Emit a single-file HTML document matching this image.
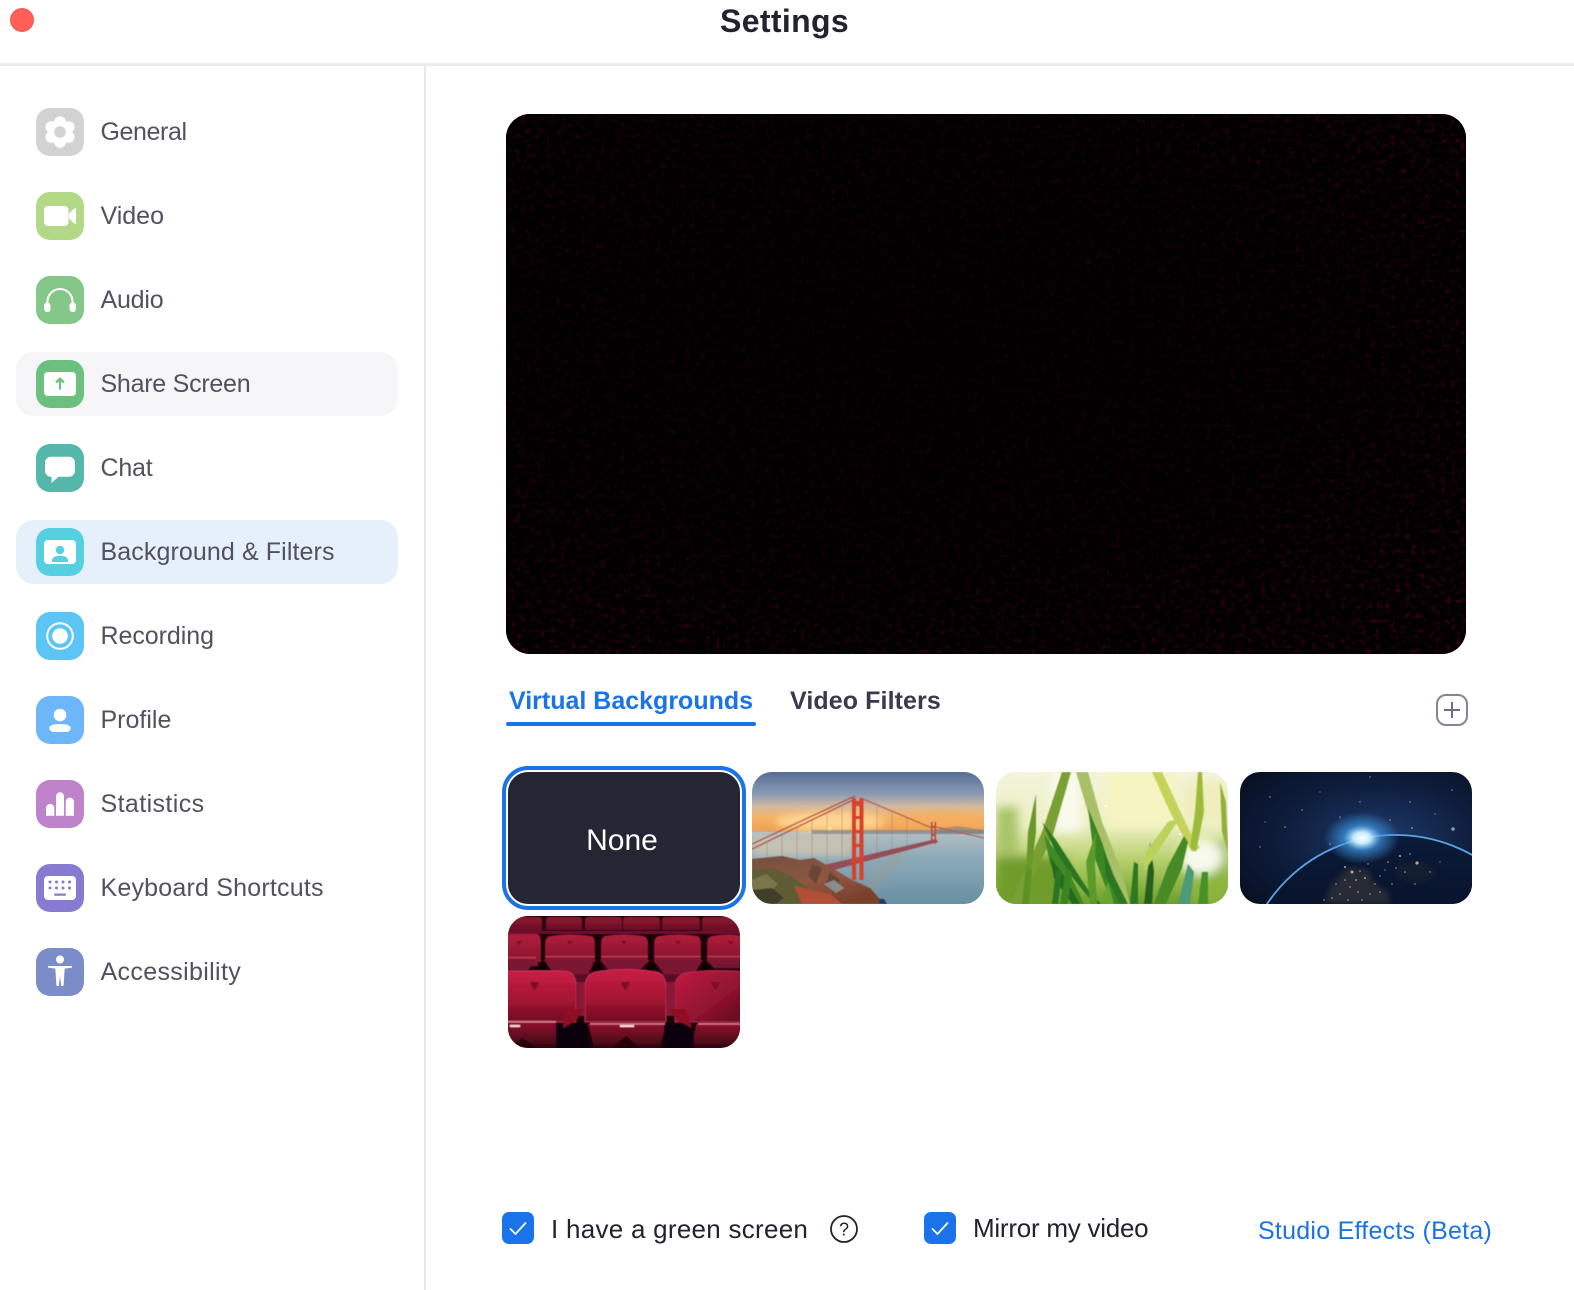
<!DOCTYPE html>
<html lang="en">
<head>
<meta charset="utf-8">
<title>Settings</title>
<style>
*{box-sizing:border-box;margin:0;padding:0}
html,body{width:1574px;height:1290px;overflow:hidden;background:#fff}
body{position:relative;font-family:"Liberation Sans",Arial,sans-serif}
.abs{position:absolute}
.dot{left:10px;top:8px;width:24px;height:24px;border-radius:50%;background:#ff5f57;border:1px solid #ee5a52}
.title{left:720px;top:1px;width:140px;height:40px;line-height:40px;font-size:32px;font-weight:700;color:#23232f;letter-spacing:.35px;white-space:nowrap}
.hline{left:0;top:63px;width:1574px;height:3px;background:#e9ebf0}
.vline{left:424px;top:66px;width:2px;height:1224px;background:#e8e8ec}
.hl{left:16px;width:382px;height:64px;border-radius:18px}
.nav{left:36px;width:380px;height:48px;display:block}
.nav svg{position:absolute;left:0;top:0;width:48px;height:48px}
.nav span{position:absolute;left:64.5px;top:0;line-height:48px;font-size:25px;color:#52525f;white-space:nowrap}
.video{left:506px;top:114px;width:960px;height:540px;border-radius:24px;overflow:hidden;background:#020000}
.tab{font-size:25px;font-weight:700;white-space:nowrap;line-height:36px;height:36px}
.ul{left:506px;top:722px;width:250px;height:4px;border-radius:2px;background:#1a73e8}
.sel{left:502px;top:766px;width:244px;height:144px;border:4px solid #1a73e8;border-radius:26px;background:#fff}
.none{left:508px;top:772px;width:232px;height:132px;border-radius:20px;background:#252533;color:#fff;font-size:30px;text-align:center;line-height:138px;padding-right:4px}
.th{position:absolute;width:232px;height:132px;display:block}
.cb{width:32px;height:32px;border-radius:7px;background:#1a73e8}
.lbl{font-size:26px;color:#23232f;white-space:nowrap;line-height:36px;height:36px}
</style>
</head>
<body>
<div class="abs dot"></div>
<div class="abs title">Settings</div>
<div class="abs hline"></div>
<div class="abs vline"></div>

<div class="abs hl" style="top:352px;background:#f6f6f9"></div>
<div class="abs hl" style="top:520px;background:#e6f0fb"></div>

<div class="abs nav" style="top:108px"><svg viewBox="0 0 48 48"><rect width="48" height="48" rx="14" fill="#d2d2d2"/><g fill="#fff"><circle cx="24" cy="24" r="12.500"/><circle cx="24" cy="14" r="5.800"/><circle cx="24" cy="34" r="5.800"/><circle cx="15.300" cy="19" r="5.800"/><circle cx="32.700" cy="19" r="5.800"/><circle cx="15.300" cy="29" r="5.800"/><circle cx="32.700" cy="29" r="5.800"/></g><circle cx="24" cy="24" r="5.800" fill="#d2d2d2"/></svg><span style="letter-spacing:-.4px">General</span></div>

<div class="abs nav" style="top:192px"><svg viewBox="0 0 48 48"><rect width="48" height="48" rx="14" fill="#b2d888"/><rect x="8" y="14" width="24.500" height="20" rx="4" fill="#fff"/><path d="M33 21.500 38.600 16.300a.8.8 0 0 1 1.400.6v14.200a.8.8 0 0 1-1.400.6L33 26.500Z" fill="#fff"/></svg><span>Video</span></div>

<div class="abs nav" style="top:276px"><svg viewBox="0 0 48 48"><rect width="48" height="48" rx="14" fill="#85c788"/><path d="M11.500 29V25.500a12.500 12.500 0 0 1 25 0V29" fill="none" stroke="#fff" stroke-width="2"/><rect x="8" y="26.500" width="6.500" height="9.500" rx="3.200" fill="#fff"/><rect x="33.500" y="26.500" width="6.500" height="9.500" rx="3.200" fill="#fff"/></svg><span style="letter-spacing:-.2px">Audio</span></div>

<div class="abs nav" style="top:360px"><svg viewBox="0 0 48 48"><rect width="48" height="48" rx="14" fill="#6cc07f"/><rect x="8" y="12" width="32" height="24" rx="4" fill="#fff"/><path d="M24 29.500V19M20 22.600 24 18.600 28 22.600" fill="none" stroke="#6cc07f" stroke-width="2.200"/></svg><span style="letter-spacing:-.25px">Share Screen</span></div>

<div class="abs nav" style="top:444px"><svg viewBox="0 0 48 48"><rect width="48" height="48" rx="14" fill="#55b6ab"/><path d="M15 12.700H33a6 6 0 0 1 6 6V26.700a6 6 0 0 1-6 6H22.500L15.500 39V32.700H15a6 6 0 0 1-6-6V18.700a6 6 0 0 1 6-6Z" fill="#fff"/></svg><span style="letter-spacing:-.2px">Chat</span></div>

<div class="abs nav" style="top:528px"><svg viewBox="0 0 48 48"><rect width="48" height="48" rx="14" fill="#56d0e0"/><rect x="8" y="12" width="32" height="24" rx="4" fill="#fff"/><circle cx="24" cy="22" r="4.200" fill="#56d0e0"/><path d="M16 34v-1.500c0-3 3-4.800 8-4.800s8 1.800 8 4.800V34Z" fill="#56d0e0"/></svg><span style="letter-spacing:.1px">Background &amp; Filters</span></div>

<div class="abs nav" style="top:612px"><svg viewBox="0 0 48 48"><rect width="48" height="48" rx="14" fill="#5cc5f6"/><circle cx="24" cy="24" r="12.800" fill="none" stroke="#fff" stroke-width="2"/><circle cx="24" cy="24" r="7.800" fill="#fff"/></svg><span style="letter-spacing:-.05px">Recording</span></div>

<div class="abs nav" style="top:696px"><svg viewBox="0 0 48 48"><rect width="48" height="48" rx="14" fill="#6db7f8"/><circle cx="24" cy="19" r="6.300" fill="#fff"/><path d="M17.500 36A4.200 4.200 0 0 1 13.300 31.800C13.300 29.500 17.500 28 24 28S34.700 29.500 34.700 31.800A4.200 4.200 0 0 1 30.500 36Z" fill="#fff"/></svg><span>Profile</span></div>

<div class="abs nav" style="top:780px"><svg viewBox="0 0 48 48"><rect width="48" height="48" rx="14" fill="#bf83cc"/><g fill="#fff"><path d="M10 35.700V28a4.100 4.100 0 0 1 8.300 0V35.700Z"/><path d="M20 35.700V16.300a4 4 0 0 1 8 0V35.700Z"/><path d="M29.700 35.700V21.800a4.100 4.100 0 0 1 8.300 0V35.700Z"/></g></svg><span style="letter-spacing:.4px">Statistics</span></div>

<div class="abs nav" style="top:864px"><svg viewBox="0 0 48 48"><rect width="48" height="48" rx="14" fill="#877ad1"/><rect x="8" y="12" width="32" height="24" rx="4" fill="#fff"/><g fill="#877ad1"><circle cx="14" cy="18" r="1.500"/><circle cx="20.500" cy="18" r="1.500"/><circle cx="27" cy="18" r="1.500"/><circle cx="33.500" cy="18" r="1.500"/><circle cx="14" cy="24" r="1.500"/><circle cx="20.500" cy="24" r="1.500"/><circle cx="27" cy="24" r="1.500"/><circle cx="33.500" cy="24" r="1.500"/><rect x="18" y="29.500" width="12" height="2.200" rx="1"/></g></svg><span style="letter-spacing:.2px">Keyboard Shortcuts</span></div>

<div class="abs nav" style="top:948px"><svg viewBox="0 0 48 48"><rect width="48" height="48" rx="14" fill="#7b8dc9"/><circle cx="24" cy="11.500" r="4" fill="#fff"/><path d="M12.800 18H35.200a.85.85 0 0 1 0 1.700L28.700 20.600 27.500 38H25.200L24 28 22.800 38H20.500L19.300 20.600 12.800 19.700a.85.85 0 0 1 0-1.700Z" fill="#fff"/></svg><span style="letter-spacing:.34px">Accessibility</span></div>

<div class="abs video">
<svg width="960" height="540" viewBox="0 0 960 540" style="display:block">
<defs>
<filter id="nz" x="0" y="0" width="100%" height="100%"><feTurbulence type="fractalNoise" baseFrequency=".2" numOctaves="2" seed="4"/><feColorMatrix values="0 0 0 0 .22  0 0 0 0 0  0 0 0 0 .02  1.800 0 0 0 -.95"/></filter>
<radialGradient id="vm" cx=".42" cy=".42" r=".75"><stop offset="0" stop-color="#fff" stop-opacity=".2"/><stop offset=".55" stop-color="#fff" stop-opacity=".35"/><stop offset="1" stop-color="#fff" stop-opacity=".85"/></radialGradient>
<mask id="vmask"><rect width="960" height="540" fill="url(#vm)"/></mask>
</defs>
<rect width="960" height="540" fill="#020000"/>
<g mask="url(#vmask)"><rect width="960" height="540" filter="url(#nz)"/></g>
</svg>
</div>

<div class="abs tab" style="left:509px;top:683px;color:#1a73e8">Virtual Backgrounds</div>
<div class="abs ul"></div>
<div class="abs tab" style="left:790px;top:683px;color:#3a3a4f;letter-spacing:.1px">Video Filters</div>
<svg class="abs" style="left:1436px;top:694px" width="32" height="32" viewBox="0 0 32 32"><rect x="1" y="1" width="30" height="30" rx="9" fill="none" stroke="#85859a" stroke-width="2"/><path d="M16 8V24M8 16H24" stroke="#6f6f84" stroke-width="2" fill="none"/></svg>

<div class="abs sel"></div>
<div class="abs none">None</div>

<!-- bridge -->
<svg class="th" style="left:752px;top:772px" viewBox="0 0 232 132">
<defs>
<clipPath id="c1"><rect width="232" height="132" rx="20"/></clipPath>
<linearGradient id="sky" x1="0" y1="0" x2="0" y2="1"><stop offset="0" stop-color="#566e94"/><stop offset=".35" stop-color="#8a9ab4"/><stop offset=".55" stop-color="#d0b9a2"/><stop offset=".72" stop-color="#f4b468"/><stop offset=".92" stop-color="#f0a252"/><stop offset="1" stop-color="#b5aca6"/></linearGradient>
<linearGradient id="wat" x1="0" y1="0" x2="0" y2="1"><stop offset="0" stop-color="#b3bfc2"/><stop offset=".35" stop-color="#8eabb9"/><stop offset="1" stop-color="#688fa3"/></linearGradient>
<linearGradient id="rock" x1="0" y1="0" x2=".6" y2="1"><stop offset="0" stop-color="#74503f"/><stop offset=".6" stop-color="#8f5640"/><stop offset="1" stop-color="#7a3f2c"/></linearGradient>
<filter id="b1"><feGaussianBlur stdDeviation=".6"/></filter>
<filter id="b3"><feGaussianBlur stdDeviation="4"/></filter>
</defs>
<g clip-path="url(#c1)">
<rect width="232" height="62" fill="url(#sky)"/>
<rect y="60" width="232" height="72" fill="url(#wat)"/>
<g filter="url(#b3)"><ellipse cx="78" cy="50" rx="55" ry="10" fill="#ffdc9a" opacity=".85"/><ellipse cx="190" cy="48" rx="50" ry="8" fill="#f5ae60" opacity=".75"/><rect y="64" width="100" height="20" fill="#cfc6b2" opacity=".8"/><path d="M150 78 130 100 115 120" stroke="#a09c8c" stroke-width="12" opacity=".4" fill="none"/></g>
<g filter="url(#b1)">
<circle cx="77" cy="57" r="2.500" fill="#ffe58a"/>
<path d="M60 58H232V62H60Z" fill="#83878f" opacity=".75"/>
<path d="M180 58 205 54 232 58V62H180Z" fill="#7d7f86" opacity=".6"/>
<path d="M0 77 103 27M0 72 103 24" stroke="#b24a3e" stroke-width="1.200" fill="none"/>
<path d="M111 27 180 56M180 54 232 66" stroke="#b25248" stroke-width="1" fill="none"/>
<path d="M15 70V92M30 62V92M45 55V92M60 48V92M75 41V92M90 33V92M125 34V82M140 40V78M155 46V74" stroke="#a8706a" stroke-width=".6" opacity=".7"/>
<path d="M72 93 184 67 186 70 78 99Z" fill="#974e54"/>
<path d="M100 26h4V108h-4ZM107.500 26h4V108h-4Z" fill="#d8402c"/>
<path d="M100 29h11v5h-11ZM100 44h11v3h-11ZM100 58h11v3h-11ZM100 72h11v3h-11ZM100 86h11v3h-11Z" fill="#d8402c"/>
<path d="M179 50h1.500V72H179ZM182.500 50h1.500V72h-1.500ZM179 54h5v2h-5ZM179 62h5v2h-5Z" fill="#b8493d"/>
<path d="M0 87 30 84 48 88 62 86 80 96 100 108 118 116 132 132H0Z" fill="url(#rock)"/>
<path d="M0 98 20 96 40 104 56 116 62 132H0Z" fill="#5f5c36"/>
<path d="M0 108 14 102 26 112 20 118 0 118Z" fill="#79774a"/>
<path d="M0 118 20 116 32 126 24 132H0Z" fill="#3f3d29"/>
<path d="M42 114 78 122 90 132H50Z" fill="#b04f35"/>
<path d="M60 92 70 96 64 112 56 104ZM78 100 88 108 82 120 74 112Z" fill="#6a4436"/>
<path d="M72 112l10-4 10 8-8 5Z" fill="#8ca0a0" opacity=".8"/>
<path d="M128 132l-2-5 6 0 3 5Z" fill="#223a6a"/>
</g>
</g>
</svg>

<!-- grass -->
<svg class="th" style="left:996px;top:772px" viewBox="0 0 232 132">
<defs>
<clipPath id="c2"><rect width="232" height="132" rx="20"/></clipPath>
<linearGradient id="gbg" x1="0" y1="0" x2="0" y2="1"><stop offset="0" stop-color="#f3f3dc"/><stop offset=".4" stop-color="#eef0c4"/><stop offset=".68" stop-color="#b4ce68"/><stop offset="1" stop-color="#6c9e2a"/></linearGradient>
<filter id="b2"><feGaussianBlur stdDeviation="5"/></filter>
<filter id="b4"><feGaussianBlur stdDeviation=".6"/></filter>
</defs>
<g clip-path="url(#c2)">
<rect width="232" height="132" fill="url(#gbg)"/>
<g filter="url(#b2)">
<rect x="0" y="35" width="22" height="55" fill="#a9c46a"/>
<rect x="0" y="85" width="70" height="47" fill="#6f9c2c"/>
<rect x="195" y="70" width="37" height="62" fill="#8cb53e"/>
<rect x="110" y="0" width="70" height="55" fill="#f6f4c0"/>
<rect x="190" y="10" width="40" height="40" fill="#f0eebc"/>
<ellipse cx="205" cy="85" rx="22" ry="18" fill="#f7faec"/>
<rect x="55" y="0" width="30" height="60" fill="#f9f9ee"/>
</g>
<g filter="url(#b4)">
<path d="M75 0 66 0 46 60 14 132 24 132 56 66Z" fill="#78a032"/>
<path d="M80 0 92 0 106 50 126 100 134 132 126 132 98 60Z" fill="#a8c068"/>
<path d="M156 0 166 0 194 60 204 76 196 80 174 40Z" fill="#c5d35a"/>
<path d="M202 0 206 0 208 40 200 80 194 76 199 40Z" fill="#9dbb3a"/>
<path d="M224 10 230 30 232 80 226 60Z" fill="#8fb13a"/>
<path d="M40 22 32 60 30 100 35 100 40 60Z" fill="#6a972c"/>
<path d="M46 50 60 68 96 124 106 132 98 132 64 90Z" fill="#2c7420"/>
<path d="M48 62 72 98 88 132 80 132 54 92Z" fill="#3f8a28"/>
<path d="M54 84 68 104 84 132 76 132 58 106Z" fill="#246a1c"/>
<path d="M92 36 106 70 126 132 116 132 98 84Z" fill="#3a8522"/>
<path d="M108 78 118 104 132 132 124 132 110 104Z" fill="#2a7620"/>
<path d="M152 96 148 132 156 132 158 100 154 70Z" fill="#285f1c"/>
<path d="M188 64 172 94 158 132 170 132 186 96 192 70Z" fill="#468a28"/>
<path d="M192 92 182 132 194 132 198 100Z" fill="#4e9a78"/>
<path d="M100 60 90 90 94 132 101 132 99 92Z" fill="#5b9a2c"/>
<path d="M60 98 56 132 62 132 66 100Z" fill="#2c7420"/>
<path d="M30 96 26 132 33 132 36 98Z" fill="#5a9228"/>
<path d="M112 110 104 132 118 132Z" fill="#6aa436"/>
<path d="M150 80 172 50 184 46 164 76 148 100Z" fill="#b9d35c"/>
<path d="M206 100 202 132 212 132 212 100Z" fill="#469026"/>
<path d="M138 90 134 132 142 132 142 92Z" fill="#2f7820"/>
<path d="M70 96 64 132 72 132 76 100Z" fill="#3a8424"/>
</g>
<g fill="#fff" opacity=".75"><circle cx="70" cy="26" r="1.500"/><circle cx="54" cy="32" r="1.300"/><circle cx="110" cy="34" r="1.600"/><circle cx="184" cy="62" r="1.300"/><circle cx="70" cy="45" r="1"/></g>
</g>
</svg>

<!-- earth -->
<svg class="th" style="left:1240px;top:772px" viewBox="0 0 232 132">
<defs>
<clipPath id="c3"><rect width="232" height="132" rx="20"/></clipPath>
<radialGradient id="sbg" cx=".6" cy=".5" r=".75"><stop offset="0" stop-color="#1d3a6c"/><stop offset=".55" stop-color="#0e1d3c"/><stop offset="1" stop-color="#080f22"/></radialGradient>
<radialGradient id="glow" cx=".5" cy=".5" r=".5"><stop offset="0" stop-color="#fff"/><stop offset=".22" stop-color="#c5ecff"/><stop offset=".5" stop-color="#3f9be8" stop-opacity=".65"/><stop offset="1" stop-color="#3f9be8" stop-opacity="0"/></radialGradient>
<linearGradient id="ea" x1="0" y1="0" x2="0" y2="1"><stop offset="0" stop-color="#0b1a38"/><stop offset=".5" stop-color="#060d1e"/></linearGradient>
<filter id="b6"><feGaussianBlur stdDeviation="3"/></filter>
</defs>
<g clip-path="url(#c3)">
<rect width="232" height="132" fill="url(#sbg)"/>
<g fill="#b9cee0" opacity=".7"><circle cx="30" cy="25" r=".8"/><circle cx="45" cy="55" r=".8"/><circle cx="62" cy="38" r=".7"/><circle cx="20" cy="75" r=".7"/><circle cx="130" cy="5" r=".7"/><circle cx="170" cy="30" r=".7"/><circle cx="212" cy="18" r=".7"/><circle cx="213" cy="57" r="1.800"/><circle cx="172" cy="56" r=".9"/><circle cx="90" cy="72" r=".8"/><circle cx="60" cy="100" r=".8"/><circle cx="100" cy="45" r=".7"/><circle cx="150" cy="48" r=".8"/><circle cx="25" cy="50" r=".6"/><circle cx="80" cy="20" r=".6"/><circle cx="120" cy="30" r=".7"/><circle cx="195" cy="42" r=".6"/></g>
<circle cx="156" cy="218" r="155" fill="url(#ea)" stroke="#5aa2e4" stroke-width="1.800"/>
<ellipse cx="122" cy="66" rx="38" ry="26" fill="url(#glow)"/>
<g filter="url(#b6)" opacity=".3"><path d="M84 132 92 112 108 96 128 98 134 112 148 120 150 132Z" fill="#6a5c46"/><ellipse cx="175" cy="100" rx="20" ry="10" fill="#2e2e33"/></g>
<g fill="#d4bf92" opacity=".85"><circle cx="105" cy="95" r="1"/><circle cx="112" cy="100" r="1.500"/><circle cx="120" cy="99" r=".8"/><circle cx="125" cy="106" r="1"/><circle cx="135" cy="112" r=".8"/><circle cx="100" cy="122" r=".8"/><circle cx="92" cy="126" r=".8"/><circle cx="140" cy="120" r=".8"/><circle cx="148" cy="90" r=".8"/><circle cx="160" cy="84" r="1"/><circle cx="177" cy="91" r="1.600"/><circle cx="165" cy="100" r=".8"/><circle cx="190" cy="100" r=".7"/><circle cx="110" cy="115" r=".8"/><circle cx="118" cy="120" r=".8"/><circle cx="105" cy="108" r=".8"/><circle cx="128" cy="92" r=".7"/><circle cx="152" cy="112" r=".7"/><circle cx="175" cy="112" r=".7"/><circle cx="96" cy="112" r=".7"/><circle cx="116" cy="108" r=".9"/><circle cx="130" cy="122" r=".7"/><circle cx="108" cy="128" r=".7"/><circle cx="84" cy="128" r=".7"/><circle cx="122" cy="128" r=".7"/><circle cx="140" cy="104" r=".7"/><circle cx="156" cy="96" r=".7"/><circle cx="170" cy="82" r=".7"/><circle cx="200" cy="90" r=".6"/><circle cx="145" cy="98" r=".6"/></g>
</g>
</svg>

<!-- seats -->
<svg class="th" style="left:508px;top:916px" viewBox="0 0 232 132">
<defs>
<clipPath id="c4"><rect width="232" height="132" rx="20"/></clipPath>
<linearGradient id="s1" x1="0" y1="0" x2="0" y2="1"><stop offset="0" stop-color="#c91e45"/><stop offset=".55" stop-color="#a51432"/><stop offset="1" stop-color="#700c22"/></linearGradient>
<linearGradient id="s1r" x1="0" y1="0" x2="1" y2="1"><stop offset="0" stop-color="#c01c40"/><stop offset=".6" stop-color="#8f1230"/><stop offset="1" stop-color="#5c0a1c"/></linearGradient>
<linearGradient id="s2" x1="0" y1="0" x2="0" y2="1"><stop offset="0" stop-color="#b01e3c"/><stop offset="1" stop-color="#86122c"/></linearGradient>
<linearGradient id="s3" x1="0" y1="0" x2="0" y2="1"><stop offset="0" stop-color="#8e1630"/><stop offset="1" stop-color="#6a0e24"/></linearGradient>
<linearGradient id="c5" x1="0" y1="0" x2="0" y2="1"><stop offset="0" stop-color="#92102e"/><stop offset="1" stop-color="#350512"/></linearGradient>
<filter id="b5"><feGaussianBlur stdDeviation=".6"/></filter>
</defs>
<g clip-path="url(#c4)">
<rect width="232" height="132" fill="#170308"/>
<g filter="url(#b5)">
<rect y="0" width="232" height="18" fill="#22050c"/>
<g fill="url(#s3)"><path d="M-4 1H30Q34 1 34 5V15H-4Z"/><path d="M41 1H70Q74 1 74 5V14H38V5Q38 1 41 1Z"/><path d="M80 1H110Q114 1 114 5V14H77V5Q77 1 80 1Z"/><path d="M118 1H148Q152 1 152 5V14H115V5Q115 1 118 1Z"/><path d="M157 1H188Q192 1 192 5V14H154V5Q154 1 157 1Z"/><path d="M197 1H236V15H194V5Q194 1 197 1Z"/></g>
<rect y="15" width="232" height="3" fill="#6e1030"/>
<rect y="45" width="232" height="14" fill="#1e040b"/>
<g fill="url(#s2)"><path d="M-4 18H28Q33 18 33 26V50H-4Z"/><path d="M42 20Q62 17 83 20 87 21 87 28V44H37V28Q37 21 42 20Z"/><path d="M97 20Q116 17 135 20 140 21 140 28V44H93V28Q93 21 97 20Z"/><path d="M151 20Q170 17 189 20 193 21 193 28V44H146V28Q146 21 151 20Z"/><path d="M204 20Q220 17 236 20V44H199V28Q199 21 204 20Z"/></g>
<g fill="#7c0f28"><path d="M8 25h6l-3 4ZM59 25h6l-3 4ZM113 25h6l-3 4ZM167 25h6l-3 4ZM220 25h6l-3 4Z"/></g>
<g fill="#c0405e"><rect x="0" y="41" width="28" height="1.200"/><rect x="37" y="40" width="50" height="1.200"/><rect x="93" y="40" width="47" height="1.200"/><rect x="146" y="40" width="47" height="1.200"/><rect x="199" y="40" width="33" height="1.200"/></g>
<g fill="#7a1230"><path d="M36 44H88L80 58H46Z"/><path d="M92 44H142L132 54H100Z"/><path d="M145 44H195L186 58H156Z"/><path d="M198 44H232V52H206Z"/><path d="M0 44H28L20 54H0Z"/></g>
<g fill="#0a0204"><rect x="30" y="46" width="8" height="8"/><rect x="85" y="46" width="8" height="12"/><rect x="140" y="46" width="6" height="10"/><rect x="194" y="46" width="6" height="10"/></g>
<rect y="57" width="232" height="11" fill="#8d1640" opacity=".55"/>
<path d="M-4 55H55Q68 55 68 70V106H-4Z" fill="url(#s1)" stroke="#c7305a" stroke-width="1"/>
<path d="M88 56Q118 51 148 56 158 58 158 72V106H77V72Q77 58 88 56Z" fill="url(#s1)" stroke="#c7305a" stroke-width="1"/>
<path d="M178 57Q205 53 236 56V106H167V72Q167 59 178 57Z" fill="url(#s1r)" stroke="#b82a50" stroke-width="1"/>
<rect x="68" y="66" width="9" height="34" fill="#8a1438"/>
<rect x="158" y="66" width="9" height="34" fill="#8a1438"/>
<g fill="#7d0c26"><path d="M22 66h9l-2 5-2.500 3-2.500-3Z"/><path d="M113 66h9l-2 5-2.500 3-2.500-3Z"/><path d="M203 66h9l-2 5-2.500 3-2.500-3Z"/></g>
<path d="M-4 106H48L52 132H-4Z" fill="url(#c5)"/>
<path d="M80 108H158L152 132H86Z" fill="url(#c5)"/>
<path d="M188 108H236V132H184Z" fill="url(#c5)"/>
<path d="M104 132 118 120 132 132Z" fill="#25060e"/>
<path d="M0 132 14 122 30 132Z" fill="#25060e"/>
<rect x="48" y="108" width="32" height="24" fill="#110308"/>
<rect x="156" y="108" width="30" height="24" fill="#110308"/>
<g fill="#df7c92"><rect x="0" y="105" width="48" height="1.600"/><rect x="82" y="107" width="75" height="1.600"/><rect x="190" y="107" width="42" height="1.600"/><rect x="112" y="109" width="14" height="2" fill="#ffe0e6"/><rect x="2" y="109" width="10" height="2" fill="#ffd8e0"/></g>
<path d="M56 93H76L68 105 55 112Z" fill="#8f1024"/>
<path d="M160 93H178L184 112 170 105Z" fill="#8f1024"/>
</g>
</g>
</svg>

<div class="abs cb" style="left:502px;top:1212px"><svg width="32" height="32" viewBox="0 0 32 32"><path d="M8 16.500 13.500 22 24 10.500" fill="none" stroke="#fff" stroke-width="1.800"/></svg></div>
<div class="abs lbl" style="left:551px;top:1211px;letter-spacing:.27px">I have a green screen</div>
<svg class="abs" style="left:830px;top:1215px" width="28" height="28" viewBox="0 0 28 28"><circle cx="14" cy="14" r="13" fill="#fff" stroke="#23232f" stroke-width="1.800"/><text x="14" y="20.500" text-anchor="middle" font-family="Liberation Sans,sans-serif" font-size="18" fill="#23232f">?</text></svg>

<div class="abs cb" style="left:924px;top:1212px"><svg width="32" height="32" viewBox="0 0 32 32"><path d="M8 16.500 13.500 22 24 10.500" fill="none" stroke="#fff" stroke-width="1.800"/></svg></div>
<div class="abs lbl" style="left:973px;top:1210px;letter-spacing:-.25px">Mirror my video</div>
<div class="abs lbl" style="left:1258px;top:1213px;font-size:25px;color:#1a73e8;letter-spacing:.25px">Studio Effects (Beta)</div>
</body>
</html>
